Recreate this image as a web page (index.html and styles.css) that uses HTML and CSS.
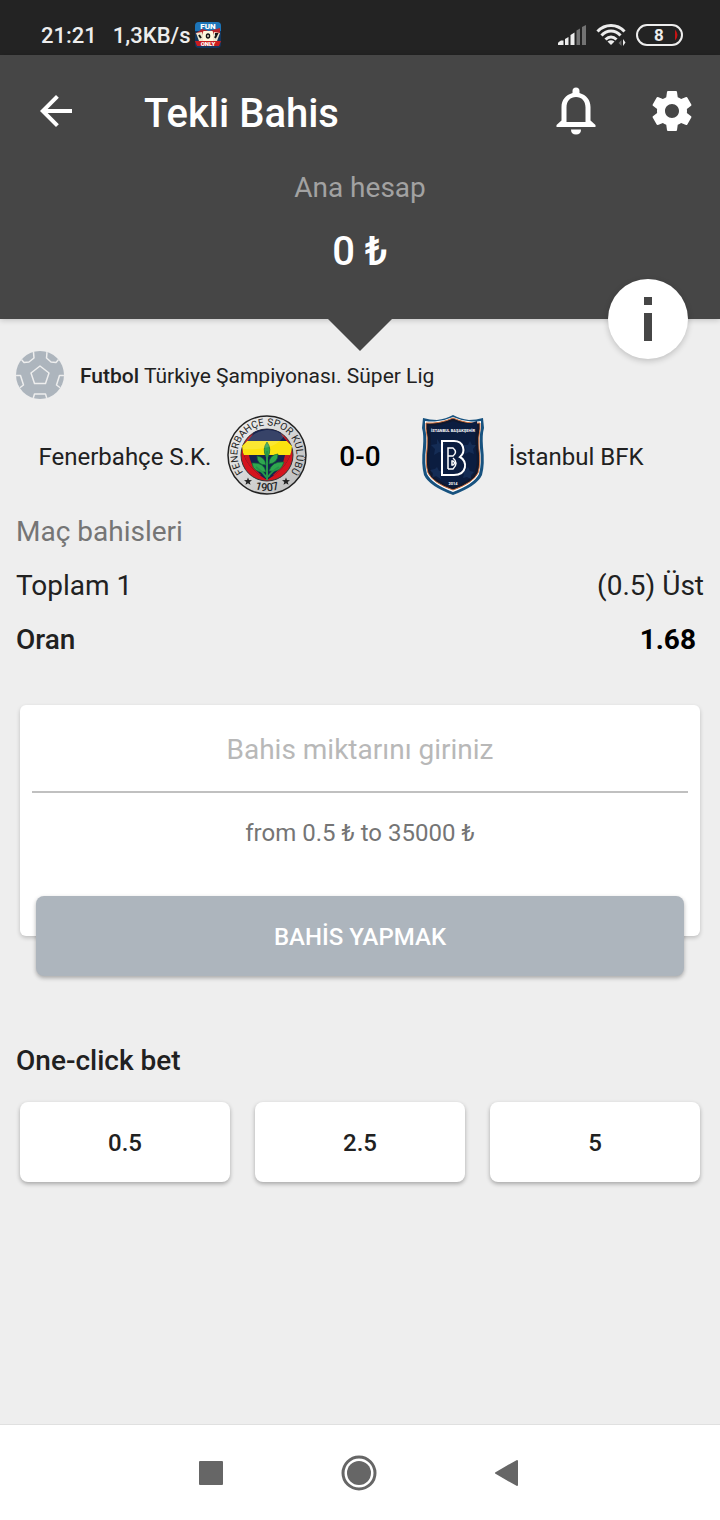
FILE: index.html
```
<!DOCTYPE html>
<html lang="tr">
<head>
  <meta charset="UTF-8">
  <meta name="viewport" content="width=device-width, initial-scale=1.0">
  <title>Tekli Bahis</title>
  <link rel="stylesheet" href="styles.css">
</head>
<body>
  <!-- Status bar -->
  <div class="status-bar">
    <span class="status-time">21:21</span>
    <span class="status-speed">1,3KB/s</span>
    <svg class="app-badge" viewBox="0 0 26 26" width="26" height="26" aria-hidden="true">
      <rect width="26" height="26" rx="4" fill="#14375f"/>
      <path d="M0 9V4a4 4 0 0 1 4-4h18a4 4 0 0 1 4 4v5z" fill="#1d75b8"/>
      <path d="M0 12l7-5 7 2 11-3v5l-12 2z" fill="#b8262b"/>
      <path d="M1 11l6-1 3 9H4zM16 19l3-9 6 1-3 8z" fill="#eee8cf"/>
      <rect x="8" y="9" width="10" height="11" rx="1" fill="#fff8dd"/>
      <path d="M4 13l2 3M20 12h2l-2 4" stroke="#151515" stroke-width="2" fill="none"/>
      <ellipse cx="13" cy="14" rx="1.500" ry="2" stroke="#151515" stroke-width="1.500" fill="none"/>
      <path d="M0 19h26l-2 5H2z" fill="#c91d20"/>
      <text x="13" y="7" class="badge-text">FUN</text>
      <text x="13" y="24" class="badge-text badge-small">ONLY</text>
    </svg>
    <div class="status-icons">
      <svg viewBox="0 0 28 20" width="28" height="20" aria-hidden="true">
        <path d="M0 20v-2q0-1 3-2.500h2.500V20zM7 14l3.500-2v8H7zM12.500 10l4-2.500V20h-4z" fill="#ededed"/>
        <path d="M18.500 5.500l3.500-2V20h-3.500zM24 2l4-2v20h-4z" fill="#737373"/>
      </svg>
      <svg viewBox="0 0 30 24" width="30" height="24" aria-hidden="true">
        <g fill="none" stroke="#ededed" stroke-width="3">
          <path d="M1.500 8.500C9 .5 21 .5 28.500 8.500"/>
          <path d="M5.500 12.500c5.500-6 13.500-6 19 0"/>
          <path d="M9.500 16.500c3.500-3.500 7.500-3.500 11 0"/>
        </g>
        <path d="M11.500 18.500q3.500-2.500 7 0L15 22z" fill="#ededed"/>
        <path d="M22.500 20l3-3v6z" fill="#666"/>
        <path d="M27 16v7l2.500-3.500z" fill="#ededed"/>
      </svg>
      <svg viewBox="0 0 47 22" width="47" height="22" aria-hidden="true">
        <rect x="1" y="1" width="45" height="20" rx="10" fill="none" stroke="#ededed" stroke-width="2"/>
        <path d="M39 5.500q5 5.500 0 11z" fill="#c81414"/>
        <text x="23" y="17" class="battery-text">8</text>
      </svg>
    </div>
  </div>

  <header class="header">
    <div class="toolbar">
      <button class="icon-btn back-btn" aria-label="Geri">
        <svg viewBox="0 0 24 24" width="48" height="48"><path fill="#fff" d="M20 11H7.830l5.590-5.590L12 4l-8 8 8 8 1.410-1.410L7.830 13H20v-2z"/></svg>
      </button>
      <h1 class="title">Tekli Bahis</h1>
      <button class="icon-btn" aria-label="Bildirimler">
        <svg viewBox="0 0 48 48" width="48" height="48">
          <path fill="#fff" fill-rule="evenodd" d="M4.500 40v-2l5-4.500V20c0-7 4-12 11-14V4a3.500 3.500 0 0 1 7 0v2c7 2 11 7 11 14v13.500l5 4.500v2zM14.500 35V20.500c0-6.500 4-10.500 9.500-10.500s9.500 4 9.500 10.500V35z"/>
          <path fill="#fff" d="M19 42.500h10q0 5-5 5t-5-5z"/>
        </svg>
      </button>
      <button class="icon-btn" aria-label="Ayarlar">
        <svg viewBox="0 0 24 24" width="48" height="48"><path fill="#fff" d="M19.430 12.980c.04-.32.07-.64.07-.98s-.03-.66-.07-.98l2.110-1.650c.19-.15.24-.42.12-.64l-2-3.460c-.12-.22-.39-.3-.61-.22l-2.490 1c-.52-.4-1.080-.73-1.690-.98l-.38-2.650C14.460 2.180 14.250 2 14 2h-4c-.25 0-.46.18-.49.42l-.38 2.650c-.61.25-1.170.59-1.690.98l-2.490-1c-.23-.09-.49 0-.61.22l-2 3.460c-.13.22-.07.49.12.64l2.110 1.650c-.04.32-.07.65-.07.98s.03.66.07.98l-2.110 1.650c-.19.15-.24.42-.12.64l2 3.460c.12.22.39.3.61.22l2.490-1c.52.4 1.080.73 1.690.98l.38 2.650c.03.24.24.42.49.42h4c.25 0 .46-.18.49-.42l.38-2.650c.61-.25 1.170-.59 1.690-.98l2.490 1c.23.09.49 0 .61-.22l2-3.460c.12-.22.07-.49-.12-.64l-2.110-1.650zM12 15.500c-1.930 0-3.500-1.570-3.500-3.500s1.570-3.500 3.500-3.500 3.500 1.570 3.500 3.500-1.570 3.500-3.500 3.500z"/></svg>
      </button>
    </div>
    <p class="account-label">Ana hesap</p>
    <p class="account-balance">0 ₺</p>
    <button class="info-btn" aria-label="Bilgi">
      <svg viewBox="0 0 8 44" width="8" height="44"><path fill="#464646" d="M0 0h8v8H0zM0 16h8v28H0z"/></svg>
    </button>
  </header>

  <main class="content">
    <div class="league">
      <svg viewBox="0 0 48 48" width="48" height="48" aria-hidden="true">
        <defs><clipPath id="ball"><circle cx="24" cy="24" r="24"/></clipPath></defs>
        <circle cx="24" cy="24" r="24" fill="#adb5bd"/>
        <g fill="none" stroke="#eee" stroke-width="1.500" stroke-linejoin="round" clip-path="url(#ball)">
          <path d="M24 15l9 7-3.500 10.500h-11L15 22z"/>
          <path d="M5 8l3 3.500 5-.5 5-4-.5-6"/>
          <path d="M43 8l-3 3.500-5-.5-4.500-4 .5-6"/>
          <path d="M0 24.500h4.500l3 9.500-4 3"/>
          <path d="M48 24.500h-4.500l-3 9.500 4 3"/>
          <path d="M17 48l1.500-5h11l1.500 5"/>
        </g>
      </svg>
      <p class="league-name"><b>Futbol</b> Türkiye Şampiyonası. Süper Lig</p>
    </div>

    <div class="match">
      <div class="team home">
        <span class="team-name">Fenerbahçe S.K.</span>
        <svg viewBox="0 0 80 80" width="80" height="80" role="img" aria-label="Fenerbahçe">
          <defs>
            <linearGradient id="silver" x1="0" y1="0" x2="1" y2="1">
              <stop offset="0" stop-color="#f4f4f4"/>
              <stop offset="1" stop-color="#b8b8b8"/>
            </linearGradient>
            <clipPath id="shield"><path d="M27 17Q40 11 53 17Q57 24 65 31Q64 51 40 65Q16 51 15 31Q23 24 27 17z"/></clipPath>
            <path id="crest-top" d="M17.400 58.900A29.500 29.500 0 1 1 62.600 58.900"/>
            <path id="crest-bottom" d="M20 70A36 36 0 0 0 60 70"/>
          </defs>
          <circle cx="40" cy="40" r="39" fill="url(#silver)" stroke="#222" stroke-width="1.500"/>
          <circle cx="40" cy="40" r="26" fill="#d5141d" stroke="#333" stroke-width="1"/>
          <g clip-path="url(#shield)">
            <path d="M14 10h52v56H14z" fill="#15234e"/>
            <path d="M14 26h52v14H14z" fill="#fbe30f"/>
            <path d="M14 40h8q2 12 12 20l-6 4-14-10zM66 40h-8q-2 12-12 20l6 4 14-10z" fill="#c9151c"/>
          </g>
          <g fill="#2fa650" stroke="#116a35" stroke-width=".7">
            <path d="M40 27q5 7 1 15h-2q-4-8 1-15z"/>
            <path d="M39 50q-9 0-9-9 8 1 9 9zM42 49q0-9 9-10 0 9-9 10zM39 57q-13 1-14-9 12-1 14 9zM42 56q3-10 15-9-3 11-15 9z"/>
          </g>
          <path d="M40 36v29M40 63q-4-6-11-11M41 62q4-6 11-10" stroke="#25964a" stroke-width="2" fill="none"/>
          <path d="M16 34q4-16 23-19 10-1 18 6-9 15-41 13z" fill="#fff" opacity=".15"/>
          <text class="crest-text"><textPath href="#crest-top" startOffset="50%">FENERBAHÇE SPOR KULÜBÜ</textPath></text>
          <text class="crest-text crest-year"><textPath href="#crest-bottom" startOffset="50%">1907</textPath></text>
          <path d="M21 62.500l1 2.500 3 .2-2.300 1.800.8 2.800-2.500-1.500-2.500 1.500.8-2.800L17 65.200l3-.2zM59 62.500l1 2.500 3 .2-2.300 1.800.8 2.800-2.500-1.500-2.500 1.500.8-2.800-2.300-1.800 3-.2z" fill="#222"/>
        </svg>
      </div>
      <strong class="score">0-0</strong>
      <div class="team away">
        <svg viewBox="0 0 80 80" width="80" height="80" role="img" aria-label="İstanbul Başakşehir">
          <path d="M10 3q7 2 14 2 9-1 16-5 7 4 16 5 7 0 14-2l1 10q-2 7-1 19 2 17-1 28-5 11-29 20Q16 71 11 60 8 49 10 32q1-12-1-19z" fill="#17527f"/>
          <path d="M12 6q7 1 13 0 8-1 15-4 7 3 15 4 6 1 13 0v7q-2 8-1 20 2 15-1 26-5 10-26 18-21-8-26-18-3-11-1-26 1-12-1-20z" fill="#fff"/>
          <path d="M13 8q14 1 27-5 13 6 27 5v6q-2 8-1 20 2 14-1 24-5 10-25 17-20-7-25-17-3-10-1-24 1-12-1-20z" fill="#10182e" stroke="#cf713e" stroke-width="1"/>
          <path d="M16 11q12 0 24-5 12 5 24 0v7q-3 9-1 22 2 13-1 22-4 9-22 15-18-6-22-15-3-9-1-22 2-13-1-22z" fill="#0b1d40"/>
          <g fill="#1b3764" opacity=".6">
            <path d="M24 24l3 5 5-1-3 5 2 5-5-1-5 3 1-6-4-4 6-1zM57 26l2 4h4l-3 4 1 5-5-2-4 2 1-5-3-4 5 0zM24 52l2 4h5l-4 3 1 5-5-3-4 2 1-5-3-3 5-1zM55 52l2 4 4 1-3 3v4l-4-2-4 1 1-4-2-3 4-1z"/>
          </g>
          <text x="40" y="17" class="shield-name">İSTANBUL BAŞAKŞEHİR</text>
          <g fill="none" stroke="#fff">
            <path d="M29 26h12c10 0 12 11 6 16 8 4 7 18-6 18H29z" stroke-width="2"/>
            <path d="M35 54V33h5q5 4 0 8h-5M35 54h5q6-6 0-11M39 46v4h1q3-2 0-4z" stroke-width="1.500"/>
          </g>
          <text x="40" y="70" class="shield-year">2014</text>
        </svg>
        <span class="team-name">İstanbul BFK</span>
      </div>
    </div>

    <h2 class="market">Maç bahisleri</h2>
    <div class="bet-row">
      <span>Toplam 1</span>
      <span>(0.5) Üst</span>
    </div>
    <div class="bet-row odds">
      <span>Oran</span>
      <span class="odds-value">1.68</span>
    </div>

    <form class="bet-form">
      <div class="bet-card">
        <input class="amount" type="text" inputmode="decimal" placeholder="Bahis miktarını giriniz" aria-label="Bahis miktarını giriniz">
        <p class="limits">from 0.5 ₺ to 35000 ₺</p>
      </div>
      <button class="submit-btn" type="button">BAHİS YAPMAK</button>
    </form>

    <h2 class="quick-title">One-click bet</h2>
    <div class="quick-bets">
      <button class="quick-btn">0.5</button>
      <button class="quick-btn">2.5</button>
      <button class="quick-btn">5</button>
    </div>
  </main>

  <!-- System navigation -->
  <nav class="nav-bar">
    <button class="nav-btn" aria-label="Son uygulamalar">
      <svg viewBox="0 0 36 36" width="36" height="36"><rect x="6" y="6" width="24" height="24" rx="1" fill="#666"/></svg>
    </button>
    <button class="nav-btn" aria-label="Ana ekran">
      <svg viewBox="0 0 36 36" width="36" height="36"><circle cx="18" cy="18" r="16" fill="none" stroke="#666" stroke-width="3"/><circle cx="18" cy="18" r="12" fill="#666"/></svg>
    </button>
    <button class="nav-btn" aria-label="Geri">
      <svg viewBox="0 0 36 36" width="36" height="36"><path d="M7 18L28 6v24z" fill="#666" stroke="#666" stroke-width="2" stroke-linejoin="round"/></svg>
    </button>
  </nav>
</body>
</html>
```
FILE: styles.css
```
* {
  margin: 0;
  padding: 0;
  box-sizing: border-box;
}

body {
  display: flex;
  flex-direction: column;
  min-height: 100vh;
  font-family: Roboto, 'Noto Sans', sans-serif;
  background-color: #eee;
  color: #212121;
}

button {
  border: none;
  background: none;
  font-family: inherit;
  cursor: pointer;
}

svg {
  display: block;
  flex-shrink: 0;
}

/* Status bar */
.status-bar {
  display: flex;
  align-items: center;
  height: 55px;
  padding: 15px 37px 0 41px;
  background-color: #232323;
  color: #ededed;
  font-size: 22px;
  font-weight: 500;
}

.status-speed {
  margin-left: 16px;
}

.app-badge {
  margin-left: 5px;
}

.status-icons {
  display: flex;
  align-items: center;
  gap: 10px;
  margin-left: auto;
}

.badge-text {
  font-size: 8px;
  font-weight: 900;
  fill: #fff;
  text-anchor: middle;
}

.badge-small {
  font-size: 6px;
}

.battery-text {
  font-size: 17px;
  font-weight: 700;
  fill: #ededed;
  text-anchor: middle;
}

/* Header */
.header {
  position: relative;
  padding-bottom: 43px;
  background-color: #464646;
  color: #fff;
  text-align: center;
  box-shadow: 0 1px 6px rgba(0, 0, 0, 0.2);
}

.header::after {
  content: '';
  position: absolute;
  top: 100%;
  left: 50%;
  margin-left: -32px;
  border: 32px solid transparent;
  border-top-color: #464646;
  border-bottom: none;
}

.toolbar {
  display: flex;
  align-items: center;
  height: 112px;
}

.icon-btn {
  display: flex;
  align-items: center;
  justify-content: center;
  width: 96px;
  height: 96px;
}

.back-btn {
  width: 112px;
}

.title {
  flex: 1;
  padding: 6px 0 0 32px;
  font-size: 40px;
  font-weight: 500;
  line-height: 48px;
  text-align: left;
}

.account-label {
  margin-top: 5px;
  font-size: 28px;
  line-height: 32px;
  color: #a2a2a2;
}

.account-balance {
  margin-top: 24px;
  font-size: 40px;
  font-weight: 500;
  line-height: 48px;
}

.info-btn {
  position: absolute;
  right: 32px;
  bottom: -40px;
  display: flex;
  align-items: center;
  justify-content: center;
  width: 80px;
  height: 80px;
  border-radius: 50%;
  background-color: #fff;
  box-shadow: 0 2px 6px rgba(0, 0, 0, 0.2);
}

/* Bet details */
.content {
  flex: 1;
  padding: 32px 16px;
}

.league {
  display: flex;
  align-items: center;
  gap: 16px;
}

.league-name {
  padding-top: 2px;
  font-size: 21px;
}

.league-name b {
  font-weight: 500;
}

.match {
  display: grid;
  grid-template-columns: 1fr auto 1fr;
  align-items: center;
  gap: 32px;
  margin-top: 16px;
}

.team {
  display: flex;
  align-items: center;
  gap: 16px;
  font-size: 24px;
}

.team-name {
  padding-top: 4px;
}

.home {
  justify-content: flex-end;
}

.score {
  padding-top: 2px;
  font-size: 28px;
  font-weight: 500;
  color: #000;
}

.crest-text {
  font-size: 10px;
  fill: #222;
  text-anchor: middle;
}

.crest-year {
  font-size: 11px;
  font-weight: 500;
}

.shield-name,
.shield-year {
  font-size: 4px;
  font-weight: 700;
  fill: #fff;
  text-anchor: middle;
}

.market {
  margin-top: 10px;
  font-size: 28px;
  font-weight: 400;
  line-height: 54px;
  color: #757575;
}

.bet-row {
  display: flex;
  justify-content: space-between;
  font-size: 28px;
  line-height: 54px;
}

.odds {
  font-weight: 500;
}

.odds-value {
  padding-right: 8px;
  font-weight: 700;
  color: #000;
}

/* Bet form */
.bet-form {
  margin: 38px 4px 0;
}

.bet-card {
  padding: 0 12px 87px;
  background-color: #fff;
  border-radius: 6px;
  box-shadow: 0 2px 4px rgba(0, 0, 0, 0.2);
  text-align: center;
}

.amount {
  width: 100%;
  height: 88px;
  padding-top: 2px;
  border: none;
  border-bottom: 2px solid #c0c0c0;
  outline: none;
  background: none;
  font-family: inherit;
  font-size: 28px;
  text-align: center;
}

.amount::placeholder {
  color: #b8b8b8;
}

.limits {
  margin-top: 24px;
  font-size: 24px;
  line-height: 32px;
  color: #757575;
}

.submit-btn {
  display: block;
  width: calc(100% - 32px);
  height: 80px;
  margin: -40px auto 0;
  padding-top: 2px;
  position: relative;
  border-radius: 8px;
  background-color: #adb5bd;
  box-shadow: 0 2px 4px rgba(0, 0, 0, 0.3);
  color: #fff;
  font-size: 24px;
  font-weight: 500;
}

/* One-click bets */
.quick-title {
  margin-top: 68px;
  font-size: 28px;
  font-weight: 500;
  line-height: 34px;
}

.quick-bets {
  display: grid;
  grid-template-columns: repeat(3, 1fr);
  gap: 25px;
  margin: 24px 4px 0;
}

.quick-btn {
  height: 80px;
  padding-top: 2px;
  border-radius: 8px;
  background-color: #fff;
  box-shadow: 0 2px 4px rgba(0, 0, 0, 0.3);
  color: #212121;
  font-size: 24px;
  font-weight: 500;
}

/* System navigation */
.nav-bar {
  display: flex;
  align-items: center;
  justify-content: center;
  gap: 112px;
  height: 96px;
  padding-right: 2px;
  border-top: 1px solid #e0e0e0;
  background-color: #fff;
}
```
